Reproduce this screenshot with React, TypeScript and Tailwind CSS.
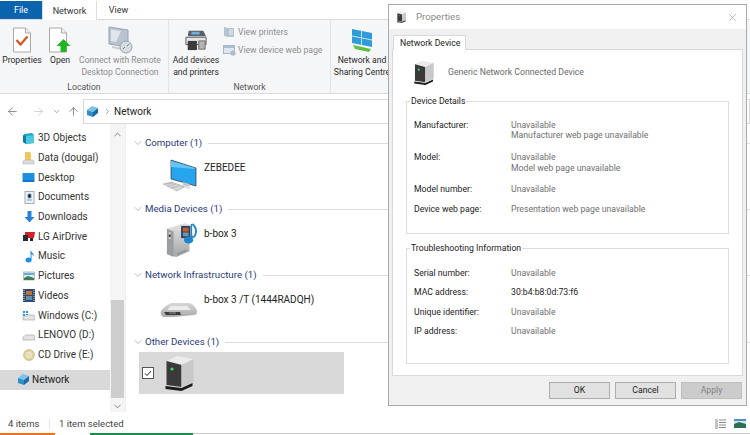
import { ArrowLeft, ArrowRight, ArrowUp, ChevronDown, ChevronRight, ChevronUp, X } from "lucide-react";
import type { ReactNode } from "react";

const FONT = { fontFamily: 'Roboto, "Open Sans", sans-serif' };

function PropertiesIcon() {
  return (
    <svg width="20" height="26" viewBox="0 0 20 26">
      <path d="M1.5 1h12l5 5v19h-17z" fill="#fff" stroke="#a8a8a8" />
      <path d="M13.5 1v5h5" fill="#eee" stroke="#a8a8a8" />
      <path d="M4.5 13l4 4.5 7-8" fill="none" stroke="#d9541e" strokeWidth="2.2" />
    </svg>
  );
}

function OpenIcon() {
  return (
    <svg width="24" height="26" viewBox="0 0 24 26">
      <path d="M1.5 1h12l5 5v19h-17z" fill="#fff" stroke="#a8a8a8" />
      <path d="M13.5 1v5h5" fill="#eee" stroke="#a8a8a8" />
      <path d="M15.5 12l7 7h-4v6h-6v-6h-4z" fill="#22b522" />
    </svg>
  );
}

function RemoteIcon() {
  return (
    <svg width="28" height="28" viewBox="0 0 28 28">
      <path d="M3 1l19 3v17l-19-3z" fill="#b9c4d0" stroke="#99a3ae" />
      <path d="M5 3.500l10 1.600-5 11-5-1z" fill="#dfe5ea" />
      <path d="M6 20l10 2v2l-10-2z" fill="#c9ced3" />
      <circle cx="20" cy="21" r="6" fill="#d5dde3" stroke="#9aa5ae" />
      <path d="M17 23l2-2m2-1l2-2" stroke="#76828c" strokeWidth="1" />
    </svg>
  );
}

function PrinterIcon() {
  return (
    <svg width="24" height="22" viewBox="0 0 26 24">
      <path d="M5 2l16 0 3 6-20 0z" fill="#5a6066" />
      <path d="M8 3h9v3h-9z" fill="#6fb0d8" />
      <path d="M2 9h22v8h-22z" fill="#e6e6e6" stroke="#555" />
      <path d="M4 13h10v10h-10z" fill="#3c3c3c" />
      <path d="M16 13h7v9h-7z" fill="#b4b4b4" stroke="#666" />
    </svg>
  );
}

function SmallPrinters() {
  return (
    <svg width="12" height="12" viewBox="0 0 12 12">
      <path d="M1 1l4 1v9l-4-1zM5 2h6v9h-6z" fill="#b6c3d2" />
      <path d="M6 4h4M6 6h4M6 8h4" stroke="#e8edf2" />
    </svg>
  );
}

function SmallWeb() {
  return (
    <svg width="13" height="12" viewBox="0 0 13 12">
      <rect x="0.5" y="1.5" width="11" height="8" fill="#dfe6ee" stroke="#a9b6c4" />
      <path d="M1 2h10v2h-10z" fill="#a8bfd6" />
      <circle cx="10" cy="9" r="2.6" fill="#a9bccf" />
    </svg>
  );
}

function SharingIcon() {
  return (
    <svg width="22" height="25" viewBox="0 0 22 25">
      <path d="M1 1l20 4v14l-20-4z" fill="#2f9bd8" />
      <path d="M10.500 3v14M1 8l20 4" stroke="#bfe4f6" />
      <path d="M2 17l18 4-2 3-14-3z" fill="#5cbf3e" />
    </svg>
  );
}

function NetworkIcon({ size = 13 }: { size?: number }) {
  return (
    <svg width={size} height={size} viewBox="0 0 13 13">
      <path d="M6 1l6 2-5 4-6-2z" fill="#79c3ea" />
      <path d="M1 5l6 2v5l-6-2z" fill="#2f8fcb" />
      <path d="M7 7l5-4v5l-5 4z" fill="#1a6aa6" />
    </svg>
  );
}

function DriveIcon({ accent }: { accent?: boolean }) {
  return (
    <svg width="13" height="13" viewBox="0 0 13 13">
      <path d="M1 8l3-2h8l1 2v3h-12z" fill="#e3e3e3" stroke="#a2a2a2" strokeWidth="0.6" />
      {accent && <path d="M1 2h2v2h-2zM4 2h2v2h-2zM1 5h2v2h-2zM4 5h2v1h-2z" fill="#22a0dc" />}
    </svg>
  );
}

function NavIcon({ name }: { name: string }) {
  switch (name) {
    case "3d":
      return (
        <svg width="13" height="13" viewBox="0 0 13 13">
          <path d="M2 2l8-1 2 2v8l-8 1-3-2z" fill="#22a6c9" />
          <path d="M4 4l8-1v8l-8 1z" fill="#4cc7dc" />
          <path d="M1 3l3 1v8l-3-2z" fill="#0e7ea0" />
        </svg>
      );
    case "data":
      return (
        <svg width="13" height="14" viewBox="0 0 13 14">
          <path d="M3 1h5l1 2v7h-6z" fill="#eec85a" />
          <path d="M1 10l2-1h8l1 1v3h-11z" fill="#dcdcdc" stroke="#aaa" strokeWidth="0.5" />
        </svg>
      );
    case "desktop":
      return (
        <svg width="13" height="11" viewBox="0 0 13 11">
          <rect width="12" height="9" x="0.5" y="1" fill="#1d8fe1" />
          <path d="M1 9h11" stroke="#0b5ea6" />
        </svg>
      );
    case "docs":
      return (
        <svg width="11" height="13" viewBox="0 0 11 13">
          <rect x="1" y="0.5" width="9" height="12" fill="#eef2f6" stroke="#a6b0ba" />
          <path d="M4 3h3v4h-3zM3 9h5" stroke="#7ba5c8" />
        </svg>
      );
    case "down":
      return (
        <svg width="11" height="12" viewBox="0 0 11 12">
          <path d="M3.500 0h4v6h3l-5 5.500-5-5.500h3z" fill="#2a7fd6" />
        </svg>
      );
    case "lg":
      return (
        <svg width="13" height="11" viewBox="0 0 13 11">
          <path d="M3 1h10l-1 6h-9z" fill="#d4202a" />
          <path d="M1 4h5v6h-5zM8 7h3v3h-3z" fill="#2a2a2a" />
        </svg>
      );
    case "music":
      return (
        <svg width="10" height="14" viewBox="0 0 10 14">
          <ellipse cx="3.500" cy="11" rx="3" ry="2.500" fill="#1f8fe0" />
          <path d="M5.500 11v-10c1 2.500 3.500 3 3.500 6.500-.8-1.500-2-2.300-2.500-2.500v6z" fill="#1f8fe0" />
        </svg>
      );
    case "pics":
      return (
        <svg width="12" height="10" viewBox="0 0 12 10">
          <rect width="11" height="8" x="0.5" y="1" fill="#d9ecf5" stroke="#9aa8b3" strokeWidth="0.7" />
          <path d="M1 7l4-2 6 2v2h-10z" fill="#3f7d55" />
          <path d="M1 2h10v2h-10z" fill="#6fa9d5" />
        </svg>
      );
    case "videos":
      return (
        <svg width="12" height="13" viewBox="0 0 12 13">
          <rect width="12" height="13" fill="#2e4a75" />
          <path d="M3 2h6v4h-6z" fill="#c96f2c" />
          <path d="M3 7h6v4h-6z" fill="#5f8ea8" />
          <path d="M1 1v11M11 1v11" stroke="#d6d6d6" strokeDasharray="1 1" />
        </svg>
      );
    case "win":
      return <DriveIcon accent />;
    case "lenovo":
      return <DriveIcon />;
    default:
      return (
        <svg width="12" height="12" viewBox="0 0 12 12">
          <circle cx="6" cy="6" r="5.500" fill="#e0cf90" stroke="#b9b49a" strokeWidth="0.6" />
          <circle cx="6" cy="6" r="3.300" fill="#efe6c0" />
          <circle cx="6" cy="6" r="1.300" fill="#fff" stroke="#aaa" strokeWidth="0.5" />
        </svg>
      );
  }
}

function ComputerIcon() {
  return (
    <svg width="36" height="33" viewBox="0 0 36 33">
      <path d="M9 1l25 8v18l-25-7z" fill="#26a5ee" stroke="#333" strokeWidth="0.7" />
      <path d="M9 2v6l24 2v-1z" fill="#63c4f5" />
      <path d="M21 23l7 2v2l-7 0z" fill="#c3c8cc" />
      <path d="M16 25l13 3-2 2-12-3z" fill="#dcdfe1" />
      <path d="M1 25l9-2 12 5-7 4z" fill="#d4d6d8" stroke="#a4a8ab" strokeWidth="0.6" />
      <path d="M4 25l7-1M6 27l8-2M9 29l8-2" stroke="#9aa0a4" strokeWidth="0.5" />
    </svg>
  );
}

function MediaIcon() {
  return (
    <svg width="32" height="38" viewBox="0 0 34 38">
      <defs>
        <linearGradient id="mediaBody" x1="0" y1="0" x2="0" y2="1">
          <stop offset="0" stopColor="#e4e4e4" />
          <stop offset="1" stopColor="#a3a5a7" />
        </linearGradient>
      </defs>
      <path d="M1 7l19-6 5 2v28l-14 6-10-3z" fill="url(#mediaBody)" />
      <path d="M1 7l7 3v27l-7-3z" fill="#9b9d9f" />
      <path d="M3 11h2v7h-2z" fill="#dfe5c8" />
      <path d="M3 13h2v3h-2z" fill="#3d3d3d" />
      <path d="M16 4h10v13h-10z" fill="#33425a" />
      <path d="M18 6h6v4h-6z" fill="#c85e2a" />
      <path d="M18 11h6v4h-6z" fill="#6d95ad" />
      <path d="M28 2c4 3 5 8 3 12-1 3-4 2-4 0" fill="none" stroke="#1b85cf" strokeWidth="2" />
      <path d="M27 2v15" stroke="#1b85cf" strokeWidth="1.500" />
      <ellipse cx="24" cy="19" rx="5" ry="3.800" fill="#1b85cf" />
      <path d="M12 33l10-4v2l-10 4z" fill="#8f9296" />
    </svg>
  );
}

function RouterIcon() {
  return (
    <svg width="38" height="16" viewBox="0 0 38 16">
      <defs>
        <linearGradient id="routerTop" x1="0" y1="0" x2="0" y2="1">
          <stop offset="0" stopColor="#d8d8d8" />
          <stop offset="1" stopColor="#a8a8a8" />
        </linearGradient>
      </defs>
      <path d="M1 9c2-3 8-8 11-8h17c3 0 7 4 8 8 0 3-1 4-3 4l-21 2h-9c-2 0-4-3-3-6z" fill="url(#routerTop)" />
      <path d="M11 4h16l4 4h-24z" fill="#ececec" />
      <path d="M4 10h16l1 3h-15z" fill="#3c3c3c" />
      <path d="M9 11h7" stroke="#bbb" strokeWidth="0.7" />
    </svg>
  );
}

function DeviceIcon({ w, h }: { w: number; h: number }) {
  return (
    <svg width={w} height={h} viewBox="0 0 28 36">
      <path d="M1 6l10-5 17 3-8 6z" fill="#ececec" />
      <path d="M1 6l15 4v22l-15-2z" fill="#3a3a3a" />
      <path d="M16 10l12-6v23l-12 5z" fill="#c9c9c9" />
      <circle cx="6.500" cy="14" r="1.600" fill="#35e05a" />
      <path d="M0 31l16 2 11-5v3l-11 5-16-2z" fill="#1c1c1c" />
    </svg>
  );
}

function RibbonButton({ icon, lines, muted, className }: { icon: ReactNode; lines: string[]; muted?: boolean; className: string }) {
  return (
    <div className={`flex flex-col items-center pt-[6px] ${className}`}>
      <div className="flex h-[28px] items-center justify-center">{icon}</div>
      <div className={`mt-[1px] text-center leading-[11.6px] whitespace-nowrap ${muted ? "text-[#8d8d8d]" : "text-[#2b2b2b]"}`}>
        {lines.map((line) => (
          <div key={line}>{line}</div>
        ))}
      </div>
    </div>
  );
}

const NAV_ITEMS = [
  ["3d", "3D Objects"],
  ["data", "Data (dougal)"],
  ["desktop", "Desktop"],
  ["docs", "Documents"],
  ["down", "Downloads"],
  ["lg", "LG AirDrive"],
  ["music", "Music"],
  ["pics", "Pictures"],
  ["videos", "Videos"],
  ["win", "Windows (C:)"],
  ["lenovo", "LENOVO (D:)"],
  ["cd", "CD Drive (E:)"],
];

function GroupHeader({ title }: { title: string }) {
  return (
    <div className="flex h-[16px] items-center text-[#2a3a78]">
      <ChevronDown size={12} strokeWidth={1} className="ml-[6px] text-[#777]" />
      <span className="ml-[1px] whitespace-nowrap text-[9.7px]">{title}</span>
      <div className="ml-[6px] h-px flex-1 bg-[#dcdcdc]" />
    </div>
  );
}

function DeviceRow({ icon, name, iconBox }: { icon: ReactNode; name: string; iconBox: string }) {
  return (
    <div className="flex h-[50px]">
      <div className={iconBox}>{icon}</div>
      <span className="mt-[11px] whitespace-nowrap text-[#222]">{name}</span>
    </div>
  );
}

const DETAIL_ROWS = [
  { label: "Manufacturer:", lines: ["Unavailable", "Manufacturer web page unavailable"], h: "h-[32.5px]" },
  { label: "Model:", lines: ["Unavailable", "Model web page unavailable"], h: "h-[32px]" },
  { label: "Model number:", lines: ["Unavailable"], h: "h-[20px]" },
  { label: "Device web page:", lines: ["Presentation web page unavailable"], h: "h-[20px]" },
];

const TROUBLE_ROWS = [
  { label: "Serial number:", value: "Unavailable" },
  { label: "MAC address:", value: "30:b4:b8:0d:73:f6", dark: true },
  { label: "Unique identifier:", value: "Unavailable" },
  { label: "IP address:", value: "Unavailable" },
];

function PropertiesDialog() {
  return (
    <div className="absolute left-[388px] top-[4px] flex h-[402px] w-[359px] flex-col border border-[#a9a9a9] bg-[#f0f0f0] text-[8.7px] leading-[10.5px]">
      <div className="flex h-[24px] items-center bg-white pl-[8px] pr-[7px]">
        <DeviceIcon w={9} h={12} />
        <span className="ml-[10px] flex-1 text-[9.6px] text-[#8a8a8a]">Properties</span>
        <X size={13} strokeWidth={1} className="text-[#8a8a8a]" />
      </div>
      <div className="mt-[6px] ml-[4px] flex">
        <div className="-mb-px z-10 flex h-[15px] w-[73px] items-center whitespace-nowrap border border-b-0 border-[#d9d9d9] bg-white pl-[6px] text-[#222]">
          Network Device
        </div>
      </div>
      <div className="mx-[3px] flex h-[327px] flex-col border border-[#d9d9d9] bg-white px-[13px]">
        <div className="flex h-[44px] items-start pl-[7px] pt-[10px]">
          <DeviceIcon w={22} h={25} />
          <span className="ml-[13px] mt-[7px] text-[#6a6a6a]">Generic Network Connected Device</span>
        </div>
        <fieldset className="h-[140px] border border-[#dcdcdc] pl-[7px]">
          <legend className="-ml-[4px] px-px leading-[14px] text-[#222]">Device Details</legend>
          <div className="pt-[11.5px]">
            {DETAIL_ROWS.map((row) => (
              <div key={row.label} className={`flex ${row.h}`}>
                <span className="w-[97px] text-[#222]">{row.label}</span>
                <div className="text-[#6f6f6f]">
                  {row.lines.map((line) => (
                    <div key={line}>{line}</div>
                  ))}
                </div>
              </div>
            ))}
          </div>
        </fieldset>
        <fieldset className="mt-[7px] h-[123px] border border-[#dcdcdc] pl-[7px]">
          <legend className="-ml-[4px] px-px leading-[14px] text-[#222]">Troubleshooting Information</legend>
          <div className="pt-[12.5px]">
            {TROUBLE_ROWS.map((row) => (
              <div key={row.label} className="flex h-[19.6px]">
                <span className="w-[97px] text-[#222]">{row.label}</span>
                <span className={row.dark ? "text-[#222]" : "text-[#6f6f6f]"}>{row.value}</span>
              </div>
            ))}
          </div>
        </fieldset>
      </div>
      <div className="mt-[6px] flex justify-end gap-[5px] pr-[4px]">
        <button className="h-[17px] w-[61px] border border-[#adadad] bg-[#e1e1e1] text-[#222]">OK</button>
        <button className="h-[17px] w-[61px] border border-[#adadad] bg-[#e1e1e1] text-[#222]">Cancel</button>
        <button className="h-[17px] w-[61px] border border-[#bfbfbf] bg-[#cccccc] text-[#838383]">Apply</button>
      </div>
    </div>
  );
}

export default function App() {
  return (
    <div className="relative flex h-[435px] w-[750px] flex-col overflow-hidden bg-white text-[10px] leading-[12px]" style={FONT}>
      {/* tabs */}
      <div className="flex h-[19px] items-end bg-white text-[9px] text-[#333]">
        <div className="flex h-[18px] w-[42px] items-center justify-center bg-[#0a63ad] text-white">File</div>
        <div className="z-10 -mb-px flex h-[19px] w-[55px] items-center justify-center border-x border-[#dadbdc] bg-white">Network</div>
        <div className="flex h-[18px] w-[40px] items-center justify-center pl-[3px]">View</div>
      </div>

      {/* ribbon */}
      <div className="flex h-[75px] border-y border-[#dadbdc] bg-[#f5f6f7] text-[8.6px] text-[#444]">
        <div className="flex w-[169px] flex-col border-r border-[#e2e3e4]">
          <div className="flex h-[60px]">
            <RibbonButton className="w-[44px]" icon={<PropertiesIcon />} lines={["Properties"]} />
            <RibbonButton className="w-[32px]" icon={<OpenIcon />} lines={["Open"]} />
            <RibbonButton className="w-[88px]" icon={<RemoteIcon />} lines={["Connect with Remote", "Desktop Connection"]} muted />
          </div>
          <div className="mt-[2px] text-center text-[#555]">Location</div>
        </div>
        <div className="flex w-[162px] flex-col border-r border-[#e2e3e4]">
          <div className="flex h-[60px]">
            <RibbonButton className="w-[54px]" icon={<PrinterIcon />} lines={["Add devices", "and printers"]} />
            <div className="flex flex-col gap-[6px] pt-[6px] text-[#8d8d8d]">
              <div className="flex h-[12px] items-center gap-[3px] whitespace-nowrap"><SmallPrinters />View printers</div>
              <div className="flex h-[12px] items-center gap-[2px] whitespace-nowrap"><SmallWeb />View device web page</div>
            </div>
          </div>
          <div className="mt-[2px] text-center text-[#555]">Network</div>
        </div>
        <RibbonButton className="w-[62px]" icon={<SharingIcon />} lines={["Network and", "Sharing Centre"]} />
      </div>

      {/* address bar */}
      <div className="flex h-[30px] items-center bg-white pt-[4px]">
        <ArrowLeft size={13} strokeWidth={1.2} className="ml-[6px] text-[#555]" />
        <ArrowRight size={13} strokeWidth={1.2} className="ml-[13px] text-[#bbb]" />
        <ChevronDown size={9} strokeWidth={1.5} className="ml-[7px] text-[#666]" />
        <ArrowUp size={13} strokeWidth={1.2} className="ml-[6px] text-[#555]" />
        <div className="ml-[3px] flex h-[25px] flex-1 items-center border border-[#d9d9d9] pl-[2px] text-[#222]">
          <NetworkIcon />
          <ChevronRight size={9} strokeWidth={1.5} className="ml-[4px] text-[#555]" />
          <span className="ml-[2px] pt-px">Network</span>
        </div>
      </div>

      {/* body */}
      <div className="flex h-[288px]">
        <div className="flex w-[110px] flex-col pt-[4.5px] text-[#333]">
          {NAV_ITEMS.map(([icon, label]) => (
            <div key={label} className="flex h-[19.7px] items-center">
              <div className="flex w-[38px] justify-end pr-[3px]"><NavIcon name={icon} /></div>
              <span className="whitespace-nowrap">{label}</span>
            </div>
          ))}
          <div className="mt-[5px] flex h-[20px] items-center bg-[#d9d9d9] pl-[17px] text-[#222]">
            <NetworkIcon />
            <span className="ml-[2px] pt-px">Network</span>
          </div>
        </div>
        <div className="flex w-[15px] flex-col items-center bg-[#f5f5f5] text-[#555]">
          <ChevronUp size={11} strokeWidth={1.5} className="mt-[5px]" />
          <div className="mt-[160px] h-[98px] w-[13px] bg-[#cdcdcd]" />
          <ChevronDown size={11} strokeWidth={1.5} className="mt-[3px]" />
        </div>
        <div className="flex-1 border-l border-[#f0f0f0] pt-[11px]">
          <GroupHeader title="Computer (1)" />
          <DeviceRow icon={<ComputerIcon />} name="ZEBEDEE" iconBox="ml-[36px] mr-[6px] mt-[8px] w-[36px]" />
          <GroupHeader title="Media Devices (1)" />
          <DeviceRow icon={<MediaIcon />} name="b-box 3" iconBox="ml-[40px] mr-[2px] mt-[4px] w-[36px]" />
          <GroupHeader title="Network Infrastructure (1)" />
          <DeviceRow icon={<RouterIcon />} name="b-box 3 /T (1444RADQH)" iconBox="ml-[34px] mr-[8px] mt-[19px] w-[36px]" />
          <div className="h-px" />
          <GroupHeader title="Other Devices (1)" />
          <div className="ml-[13px] mt-[2px] flex h-[42px] w-[205px] items-center bg-[#d9d9d9]">
            <div className="ml-[3px] flex h-[12px] w-[12px] items-center justify-center border border-[#555] bg-white">
              <svg width="8" height="7" viewBox="0 0 8 7"><path d="M1 3.500l2 2 4-4.500" fill="none" stroke="#222" /></svg>
            </div>
            <div className="ml-[11px]"><DeviceIcon w={29} h={36} /></div>
          </div>
        </div>
      </div>

      {/* status bar */}
      <div className="flex h-[20px] items-center bg-white pt-[3px] text-[9.5px] text-[#444]">
        <span className="ml-[8px] w-[41px]">4 items</span>
        <div className="h-[10px] w-px bg-[#e6e6e6]" />
        <span className="ml-[9px] flex-1">1 item selected</span>
        <svg width="11" height="12" viewBox="0 0 11 12" className="mr-[8px]">
          <path d="M0 1h3v10h-3z" fill="#c3c3c3" />
          <path d="M4 2h7M4 4.500h7M4 7h7M4 9.500h7" stroke="#8a8a8a" />
        </svg>
        <svg width="12" height="9" viewBox="0 0 12 9" className="mr-[4px]">
          <rect width="12" height="9" fill="#cfe4f1" />
          <path d="M0 5l5-2 7 2v4h-12z" fill="#2e6f53" />
          <path d="M0 0h12v2h-12z" fill="#4c90c4" />
        </svg>
      </div>

      {/* taskbar sliver */}
      <div className="flex h-[3px]">
        <div className="mt-px w-[55px] bg-[#e8731f]" />
        <div className="w-[35px]" />
        <div className="mt-px w-[103px] bg-[#1f8a4c]" />
        <div className="h-px flex-1 translate-y-px bg-[#c8c8c8]" />
      </div>

      <PropertiesDialog />
    </div>
  );
}
